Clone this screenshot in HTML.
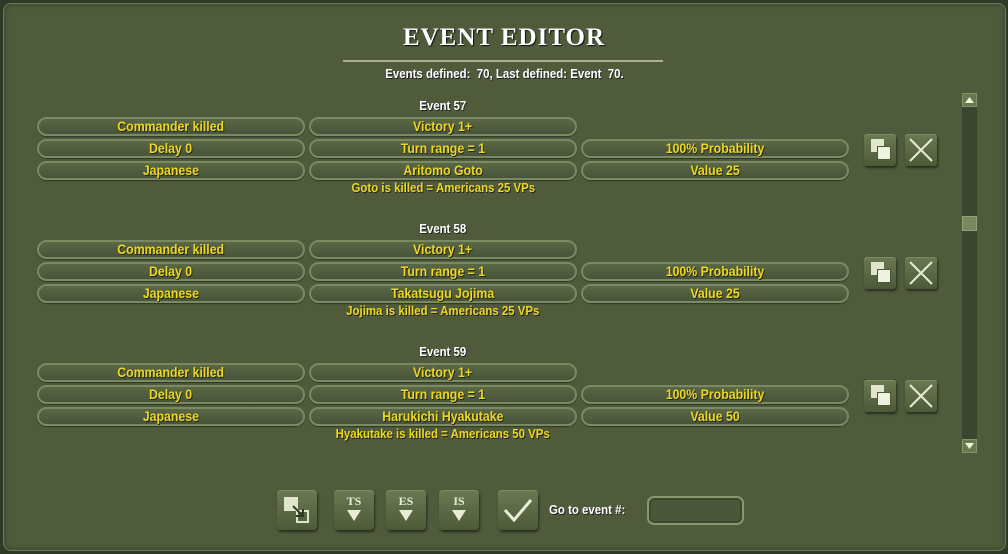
<!DOCTYPE html>
<html><head><meta charset="utf-8"><style>
*{margin:0;padding:0;box-sizing:border-box}
body{width:1008px;height:554px;overflow:hidden;background:#2f3a26;position:relative;font-family:"Liberation Sans Narrow","Liberation Sans",sans-serif;font-weight:bold}
.panel{position:absolute;left:3px;top:3px;width:1003px;height:548px;background:#4f5b3b;border-radius:8px;border:1px solid #6e7a58;box-shadow:inset 0 0 6px rgba(0,0,0,.3)}
.t{position:absolute;left:0;width:1008px;text-align:center}
.s{display:inline-block;transform:scaleX(.88);white-space:nowrap}
.pill{position:absolute;height:19px;border-radius:10px;border:2px solid #7c8a63;background:linear-gradient(#5a6844,#47543a);color:#ecd822;font-size:14px;line-height:15px;text-align:center;text-shadow:1px 1px 0 #222;box-shadow:0 1px 1px rgba(0,0,0,.4)}
.lab{position:absolute;color:#fff;font-size:13px;text-align:center;text-shadow:1px 1px 0 #222}
.cap{position:absolute;color:#ecd822;font-size:13px;text-align:center;text-shadow:1px 1px 0 #222}
.btn{position:absolute;width:32px;height:32px;border-radius:3px;background:linear-gradient(#6a7a52,#4d5a38);box-shadow:1px 2px 2px rgba(0,0,0,.5),inset 0 1px 0 #7d8c62}
.bb{position:absolute;width:40px;height:40px;border-radius:4px;background:linear-gradient(#6a7a52,#4d5a38);box-shadow:1px 2px 2px rgba(0,0,0,.5),inset 0 1px 0 #7d8c62;color:#e8ecd8;text-align:center;font-family:"Liberation Serif",serif;font-size:12px}
</style></head><body>
<div class="panel"></div>
<div class="t" style="top:24px;font-family:'Liberation Serif',serif;font-size:25px;color:#fff;letter-spacing:1px;text-shadow:1px 1px 1px #111">EVENT EDITOR</div>
<div style="position:absolute;left:343px;top:60px;width:320px;height:2px;background:#a8b28e"></div>
<div class="t" style="top:66px;color:#fff;font-size:13px;text-shadow:1px 1px 0 #222"><span class="s">Events defined:&nbsp; 70, Last defined: Event&nbsp; 70.</span></div>

<div id="ev"></div>
<script>
var data=[["57","Aritomo Goto","Value 25","Goto is killed = Americans 25 VPs"],["58","Takatsugu Jojima","Value 25","Jojima is killed = Americans 25 VPs"],["59","Harukichi Hyakutake","Value 50","Hyakutake is killed = Americans 50 VPs"]];
var h="";
data.forEach(function(d,i){var o=i*123;
h+='<div class="lab" style="left:37px;width:812px;top:'+(98+o)+'px"><span class="s">Event '+d[0]+'</span></div>';
function p(x,y,t){h+='<div class="pill" style="left:'+x+'px;width:268px;top:'+(y+o)+'px"><span class="s">'+t+'</span></div>';}
p(37,117,"Commander killed");p(309,117,"Victory 1+");
p(37,139,"Delay 0");p(309,139,"Turn range = 1");p(581,139,"100% Probability");
p(37,161,"Japanese");p(309,161,d[1]);p(581,161,d[2]);
h+='<div class="cap" style="top:'+(180+o)+'px;left:37px;width:812px"><span class="s">'+d[3]+'</span></div>';
h+='<div class="btn" style="left:864px;top:'+(134+o)+'px"><div style="position:absolute;left:7px;top:5px;width:13px;height:13px;background:#dfe6cc"></div><div style="position:absolute;left:13px;top:12px;width:14px;height:14px;background:#eef2e0;border:1px solid #4a5636"></div></div>';
h+='<div class="btn" style="left:905px;top:'+(134+o)+'px"><svg width="32" height="32" style="position:absolute;left:0;top:0"><path d="M5 5L27 27M27 5L5 27" stroke="#e6ebd4" stroke-width="2"/></svg></div>';
});
document.getElementById("ev").innerHTML=h;
</script>

<div style="position:absolute;left:962px;top:93px;width:15px;height:360px;background:#3b4530"></div>
<div style="position:absolute;left:962px;top:93px;width:15px;height:14px;background:#6a7852;border:1px solid #87946a"><svg width="13" height="12" style="position:absolute;left:0;top:0"><path d="M2 9L6.5 3L11 9Z" fill="#eef2e0"/></svg></div>
<div style="position:absolute;left:962px;top:216px;width:15px;height:15px;background:#7a8860;border:1px solid #95a278"></div>
<div style="position:absolute;left:962px;top:439px;width:15px;height:14px;background:#6a7852;border:1px solid #87946a"><svg width="13" height="12" style="position:absolute;left:0;top:0"><path d="M2 3L6.5 9L11 3Z" fill="#eef2e0"/></svg></div>

<div class="bb" style="left:277px;top:490px"><div style="position:absolute;left:7px;top:7px;width:14px;height:14px;background:#e0e6cc"></div><div style="position:absolute;left:19px;top:20px;width:13px;height:13px;border:2px solid #e0e6cc"></div><svg width="40" height="40" style="position:absolute;left:0;top:0"><path d="M16 16L26 26M26 19L26 26L19 26" stroke="#2e3a22" stroke-width="2" fill="none"/></svg></div>
<div class="bb" style="left:334px;top:490px"><div style="margin-top:4px">TS</div><svg width="40" height="14" style="position:absolute;left:0;top:19px"><path d="M13 1L27 1L20 12Z" fill="#e8ecd8"/></svg></div>
<div class="bb" style="left:386px;top:490px"><div style="margin-top:4px">ES</div><svg width="40" height="14" style="position:absolute;left:0;top:19px"><path d="M13 1L27 1L20 12Z" fill="#e8ecd8"/></svg></div>
<div class="bb" style="left:439px;top:490px"><div style="margin-top:4px">IS</div><svg width="40" height="14" style="position:absolute;left:0;top:19px"><path d="M13 1L27 1L20 12Z" fill="#e8ecd8"/></svg></div>
<div class="bb" style="left:498px;top:490px"><svg width="40" height="40" style="position:absolute;left:0;top:0"><path d="M7 20L16 30L33 10" stroke="#e8ecd8" stroke-width="3" fill="none"/></svg></div>
<div style="position:absolute;left:549px;top:502px;color:#fff;font-size:13px;text-shadow:1px 1px 0 #222"><span class="s" style="transform-origin:left">Go to event #:</span></div>
<div style="position:absolute;left:647px;top:496px;width:97px;height:29px;border-radius:7px;border:2px solid #8a9670;background:#4a573a;box-shadow:inset 0 0 0 2px #3d482f"></div>
</body></html>
